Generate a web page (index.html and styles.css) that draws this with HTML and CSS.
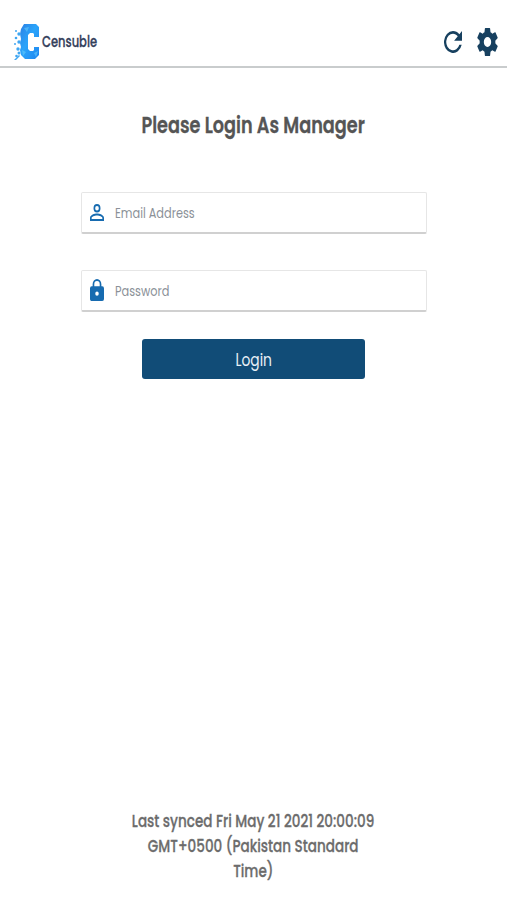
FILE: index.html
```html
<!DOCTYPE html>
<html lang="en">
<head>
    <meta charset="UTF-8">
    <meta name="viewport" content="width=device-width, initial-scale=1.0">
    <title>Censuble</title>
    <link rel="stylesheet" href="styles.css">
</head>
<body>
    <header class="topbar">
        <div class="brand">
            <svg class="brand-logo" width="28" height="40" viewBox="0 0 28 40">
                <defs>
                    <linearGradient id="logo-fill" x1="0" y1="0" x2="1" y2="1">
                        <stop offset="0" stop-color="#2a80e4"/>
                        <stop offset=".45" stop-color="#2ba4fa"/>
                        <stop offset="1" stop-color="#1e86f0"/>
                    </linearGradient>
                </defs>
                <path fill="url(#logo-fill)" d="M11 2h12l3 3v10h-5v-3l-1-1h-3l-2 2v14l2 2h3l1-1v-3h5v8l-4 4H12l-4-4-1-5 1-3-1-4 1-4-1-5 1-5z"/>
                <path fill="#62c9fb" opacity=".6" d="M11 6l5-1-2 5zM9 28l4 2-3 4zM21 31l4-2-2 6z"/>
                <g fill="#3fa6f2">
                    <circle cx="3" cy="9" r="1"/>
                    <circle cx="6" cy="12" r="1.700"/>
                    <circle cx="3" cy="16" r="1.300"/>
                    <circle cx="6" cy="20" r="1.700"/>
                    <circle cx="2" cy="22" r="1"/>
                    <circle cx="5" cy="27" r="1.700"/>
                    <circle cx="6" cy="31" r="1.500"/>
                    <circle cx="3.500" cy="34" r="1.300"/>
                    <path d="M1 38l5-5 1 1-4 4z"/>
                </g>
            </svg>
            <span class="brand-name">Censuble</span>
        </div>
        <div class="actions">
            <svg class="icon-refresh" width="18" height="22" viewBox="4 4 16 16" preserveAspectRatio="none">
                <path d="M17.65 6.35A7.96 7.96 0 0 0 12 4a8 8 0 1 0 7.73 10h-2.08A6 6 0 1 1 12 6c1.66 0 3.14.69 4.22 1.78L13 11h7V4z"/>
            </svg>
            <svg class="icon-gear" width="21" height="28" viewBox="2 2 20 20" preserveAspectRatio="none">
                <path d="M19.43 12.98c.04-.32.07-.64.07-.98s-.03-.66-.07-.98l2.11-1.65c.19-.15.24-.42.12-.64l-2-3.46c-.12-.22-.39-.3-.61-.22l-2.49 1c-.52-.4-1.08-.73-1.69-.98l-.38-2.65A.488.488 0 0 0 14 2h-4c-.25 0-.46.18-.49.42l-.38 2.65c-.61.25-1.17.59-1.69.98l-2.49-1c-.23-.09-.49 0-.61.22l-2 3.46c-.13.22-.07.49.12.64l2.11 1.65c-.04.32-.07.65-.07.98s.03.66.07.98l-2.11 1.65c-.19.15-.24.42-.12.64l2 3.46c.12.22.39.3.61.22l2.49-1c.52.4 1.08.73 1.69.98l.38 2.65c.03.24.24.42.49.42h4c.25 0 .46-.18.49-.42l.38-2.65c.61-.25 1.17-.59 1.69-.98l2.49 1c.23.09.49 0 .61-.22l2-3.46c.12-.22.07-.49-.12-.64zM12 15.5a3.5 3.5 0 1 1 0-7 3.5 3.5 0 0 1 0 7z"/>
            </svg>
        </div>
    </header>

    <main class="login">
        <h1>Please Login As Manager</h1>
        <form class="login-form">
            <label class="field">
                <svg class="field-icon" width="14" height="17" viewBox="4 4 16 16" preserveAspectRatio="none">
                    <path d="M12 5.9a2.1 2.1 0 1 1 0 4.2 2.1 2.1 0 0 1 0-4.2m0 9c2.97 0 6.1 1.46 6.1 2.1v1.1H5.9V17c0-.64 3.13-2.1 6.1-2.1M12 4a4 4 0 1 0 0 8 4 4 0 0 0 0-8zm0 9c-2.67 0-8 1.34-8 4v3h16v-3c0-2.66-5.33-4-8-4z"/>
                </svg>
                <input type="text" class="email" placeholder="Email Address">
            </label>
            <label class="field">
                <svg class="field-icon" width="14" height="22" viewBox="4 1 16 21" preserveAspectRatio="none">
                    <path d="M18 8h-1V6A5 5 0 0 0 7 6v2H6a2 2 0 0 0-2 2v10c0 1.100.9 2 2 2h12a2 2 0 0 0 2-2V10a2 2 0 0 0-2-2zm-6 9a2 2 0 1 1 0-4 2 2 0 0 1 0 4zm3.100-9H8.900V6a3.100 3.100 0 0 1 6.200 0z"/>
                </svg>
                <input type="password" class="password" placeholder="Password">
            </label>
            <button type="button"><span>Login</span></button>
        </form>
    </main>

    <footer class="synced">
        <p>Last synced Fri May 21 2021 20:00:09</p>
        <p>GMT+0500 (Pakistan Standard</p>
        <p>Time)</p>
    </footer>
</body>
</html>
```

FILE: styles.css
```css
* {
    margin: 0;
    padding: 0;
    box-sizing: border-box;
    font-family: Poppins, Inter, sans-serif;
}
body {
    display: flex;
    flex-direction: column;
    height: 900px;
    background: #fff;
    overflow: hidden;
}
.topbar {
    display: flex;
    justify-content: space-between;
    align-items: center;
    height: 68px;
    padding: 17px 9px 0 13px;
    border-bottom: 2px solid #c9cccd;
}
.brand {
    display: flex;
    align-items: center;
    gap: 1px;
}
.brand-name {
    width: 56px;
    margin-top: -1px;
    color: #34405b;
    font-size: 16px;
    font-weight: 500;
    white-space: nowrap;
    -webkit-text-stroke: .3px #34405b;
    transform: scaleX(.72);
    transform-origin: left;
}
.actions {
    display: flex;
    align-items: center;
    gap: 15px;
    fill: #17405f;
}
.login {
    display: flex;
    flex: 1;
    flex-direction: column;
    align-items: center;
}
h1 {
    margin-top: 42px;
    color: #555;
    font-size: 22px;
    font-weight: 600;
    line-height: 32px;
    white-space: nowrap;
    -webkit-text-stroke: .3px #555;
    transform: scaleX(.803);
}
.login-form {
    display: flex;
    flex-direction: column;
    align-items: center;
    margin-top: 50px;
}
.field {
    display: flex;
    align-items: center;
    width: 346px;
    height: 42px;
    margin-bottom: 36px;
    padding: 0 0 1px 8px;
    border: 1px solid #e6e6e6;
    border-bottom: 2px solid #d0d0d0;
    border-radius: 2px;
    overflow: hidden;
}
.field-icon {
    flex: none;
    fill: #176bb0;
}
.field input {
    flex: none;
    width: 380px;
    margin-left: 11px;
    border: none;
    outline: none;
    background: none;
    color: #555;
    font-size: 15px;
    transform: scaleX(.755);
    transform-origin: left;
}
.field input::placeholder {
    color: #8b9198;
}
button {
    width: 223px;
    height: 40px;
    margin-top: -9px;
    border: none;
    border-radius: 3px;
    background: #114c77;
    color: #e8f0f6;
    font-size: 18px;
    cursor: pointer;
}
button span {
    display: inline-block;
    transform: scaleX(.77);
}
.synced {
    display: flex;
    flex-direction: column;
    align-items: center;
    padding-bottom: 16px;
    color: #6c6c6c;
    font-size: 17px;
    font-weight: 500;
    line-height: 25px;
    white-space: nowrap;
    -webkit-text-stroke: .3px #6c6c6c;
}
.synced p {
    transform: scaleX(.797);
}
```
